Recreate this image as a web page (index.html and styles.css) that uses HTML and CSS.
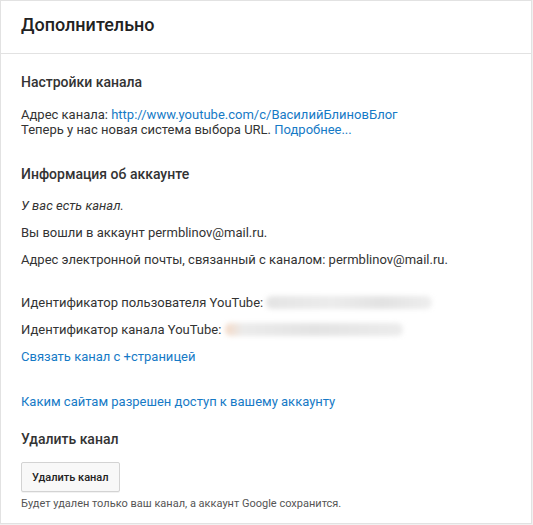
FILE: index.html
```html
<!DOCTYPE html>
<html>
<head>
  <title>Дополнительно</title>
  <link rel="stylesheet" href="styles.css">
</head>
<body>
  <div class="card">
    <div class="card-header">
      <h1>Дополнительно</h1>
    </div>

    <div class="card-body">
      <h2 class="section-title first">Настройки канала</h2>
      <p class="line">Адрес канала: <a href="#">http://www.youtube.com/c/ВасилийБлиновБлог</a></p>
      <p class="line">Теперь у нас новая система выбора URL. <a href="#">Подробнее...</a></p>

      <h2 class="section-title">Информация об аккаунте</h2>
      <p class="item first-item"><em>У вас есть канал.</em></p>
      <p class="item">Вы вошли в аккаунт permblinov@mail.ru.</p>
      <p class="item">Адрес электронной почты, связанный с каналом: permblinov@mail.ru.</p>

      <p class="item id-row">Идентификатор пользователя YouTube: <span class="blurred user-id"></span></p>
      <p class="item">Идентификатор канала YouTube: <span class="blurred channel-id"></span></p>
      <p class="item"><a href="#">Связать канал с +страницей</a></p>

      <p class="item access"><a href="#">Каким сайтам разрешен доступ к вашему аккаунту</a></p>

      <h2 class="section-title delete-title">Удалить канал</h2>
      <button class="btn">Удалить канал</button>
      <p class="note">Будет удален только ваш канал, а аккаунт Google сохранится.</p>
    </div>
  </div>
</body>
</html>
```

FILE: styles.css
```css
/* page */
body {
  margin: 0;
  background-color: #f1f1f1;
  font-family: Roboto, Arial, sans-serif;
  color: #333;
}

.card {
  width: 532px;
  height: 524px;
  background-color: #fff;
  border: 1px solid #e2e2e2;
  box-sizing: border-box;
}

/* header */
.card-header {
  padding: 12px 20px 16px;
  border-bottom: 1px solid #e2e2e2;
}

.card-header h1 {
  margin: 0;
  font-size: 18px;
  line-height: 24px;
  font-weight: 500;
  color: #222;
}

/* body */
.card-body {
  padding: 0 20px;
}

.section-title {
  margin: 28px 0 0;
  font-size: 14px;
  line-height: 18px;
  font-weight: 500;
  color: #333;
}

.section-title.first {
  margin-top: 19px;
}

.line {
  margin: 0;
  font-size: 13px;
  line-height: 15px;
}

.section-title.first + .line {
  margin-top: 16px;
}

.item {
  margin: 12px 0 0;
  font-size: 13px;
  line-height: 15px;
}

.item.first-item {
  margin-top: 15px;
}

.item.id-row {
  margin-top: 28px;
}

.item.access {
  margin-top: 30px;
}

.section-title.delete-title {
  margin-top: 21px;
}

a {
  color: #167ac6;
  text-decoration: none;
}

em {
  color: #333;
}

/* blurred ids */
.blurred {
  display: inline-block;
  vertical-align: middle;
  height: 13px;
  margin-top: -3px;
  border-radius: 6px;
  background: linear-gradient(90deg, #e4e4e4, #ececec 40%, #e2e2e2 70%, #eeeeee);
  filter: blur(2.5px);
}

.user-id {
  width: 166px;
}

.channel-id {
  width: 178px;
  background: linear-gradient(90deg, #f4d9c6, #ebebeb 10%, #e3e3e3 50%, #ececec);
}

/* delete */
.btn {
  display: block;
  margin-top: 14px;
  height: 30px;
  padding: 0 10px;
  font-family: Roboto, Arial, sans-serif;
  font-size: 11px;
  font-weight: 500;
  color: #222;
  background-color: #f8f8f8;
  border: 1px solid #d3d3d3;
  border-radius: 2px;
  box-shadow: 0 1px 0 rgba(0, 0, 0, 0.05);
}

.note {
  margin: 5px 0 0;
  font-size: 11px;
  line-height: 14px;
  color: #555;
}
```
